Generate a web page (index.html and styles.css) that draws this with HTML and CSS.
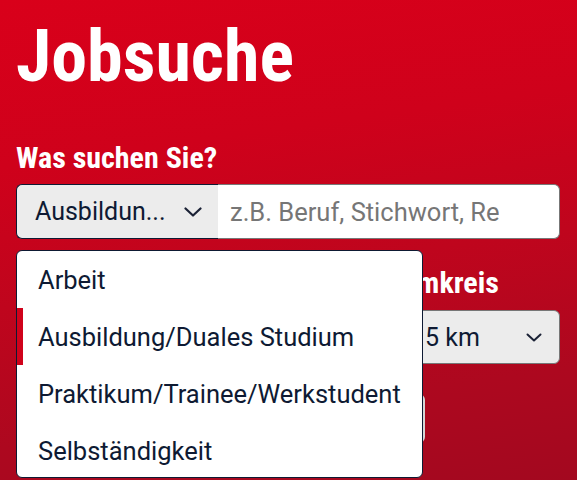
FILE: index.html
```html
<!DOCTYPE html>
<html lang="de">
<head>
<meta charset="utf-8">
<title>Jobsuche</title>
<link rel="stylesheet" href="styles.css">
</head>
<body>
<main class="page">
  <h1 class="title">Jobsuche</h1>
  <label class="label">Was suchen Sie?</label>
  <div class="search-group">
    <div class="type-wrap">
      <div class="type-select">
        <span class="type-value">Ausbildun...</span>
        <svg class="chev" width="18" height="10" viewBox="0 0 18 10"><path d="M1.5 1.5 L9 8.5 L16.5 1.5" fill="none" stroke="#1b2236" stroke-width="2.2" stroke-linecap="round" stroke-linejoin="round"/></svg>
      </div>
      <ul class="menu">
        <li class="menu-item">Arbeit</li>
        <li class="menu-item is-selected">Ausbildung/Duales Studium</li>
        <li class="menu-item">Praktikum/Trainee/Werkstudent</li>
        <li class="menu-item">Selbständigkeit</li>
      </ul>
    </div>
    <div class="keyword"><span class="placeholder">z.B. Beruf, Stichwort, Referenznummer</span></div>
  </div>
  <div class="row2">
    <div class="field">
      <label class="label">Wo?</label>
      <div class="where"></div>
    </div>
    <div class="field">
      <label class="label">Umkreis</label>
      <div class="radius">
        <span class="radius-value">15 km</span>
        <svg class="chev-sm" width="16" height="9" viewBox="0 0 16 9"><path d="M1.5 1.5 L8 7.5 L14.5 1.5" fill="none" stroke="#1b2236" stroke-width="2" stroke-linecap="round" stroke-linejoin="round"/></svg>
      </div>
    </div>
  </div>
  <div class="row3">
    <button class="more">Weitere Filter</button>
  </div>
</main>
</body>
</html>
```
FILE: styles.css
```css
html, body {
  margin: 0;
  padding: 0;
}
body {
  width: 577px;
  height: 480px;
  overflow: hidden;
  font-family: Roboto, "Liberation Sans", sans-serif;
  background: linear-gradient(172deg, #d9001a 0%, #cf011b 30%, #bf051d 55%, #ad081f 80%, #a3081f 100%);
  color: #0e1a33;
}
.page {
  padding: 20px 17px 0 16px;
}
.title {
  margin: 0;
  font-size: 72px;
  line-height: 73px;
  font-weight: 700;
  font-stretch: 75%;
  color: #fff;
}
.label {
  display: block;
  margin: 50px 0 11px;
  font-size: 30px;
  line-height: 30px;
  font-weight: 700;
  font-stretch: 75%;
  color: #fff;
}
.search-group {
  display: flex;
  height: 55px;
}
.type-wrap {
  position: relative;
  width: 202px;
  flex: none;
}
.type-select {
  box-sizing: border-box;
  height: 55px;
  display: flex;
  align-items: center;
  justify-content: space-between;
  padding: 0 16px 0 18px;
  background: #ececec;
  border: 1px solid #0e1a33;
  border-right: none;
  border-radius: 6px 0 0 6px;
  font-size: 25px;
  white-space: nowrap;
}
.keyword {
  flex: 1;
  box-sizing: border-box;
  height: 55px;
  display: flex;
  align-items: center;
  padding: 0 60px 0 12px;
  background: #fff;
  border: 1px solid #777;
  border-left: none;
  border-radius: 0 6px 6px 0;
  overflow: hidden;
}
.placeholder {
  font-size: 25.5px;
  color: #767676;
  white-space: nowrap;
  overflow: hidden;
}
.menu {
  position: absolute;
  top: 66px;
  left: 0;
  z-index: 5;
  box-sizing: border-box;
  width: 407px;
  height: 228px;
  margin: 0;
  padding: 0;
  list-style: none;
  background: #fff;
  border: 1px solid #0e1a33;
  border-radius: 6px;
  overflow: hidden;
}
.menu-item {
  box-sizing: border-box;
  height: 57px;
  display: flex;
  align-items: center;
  padding-left: 15px;
  font-size: 25.5px;
  color: #0e1a33;
  border-left: 6px solid transparent;
  white-space: nowrap;
}
.menu-item.is-selected {
  border-left-color: #d0021b;
}
.row2 {
  display: grid;
  grid-template-columns: 1fr 160px;
  column-gap: 20px;
}
.row2 .label {
  margin-top: 29px;
  margin-bottom: 12px;
}
.where {
  height: 54px;
  box-sizing: border-box;
  background: #fff;
  border: 1px solid #777;
  border-radius: 6px;
}
.radius {
  box-sizing: border-box;
  height: 54px;
  display: flex;
  align-items: center;
  justify-content: space-between;
  padding: 0 17px 0 10px;
  background: #ececec;
  border: 1px solid #777;
  border-radius: 6px;
  font-size: 25px;
}
.row3 {
  display: flex;
  padding-top: 30px;
}
.more {
  width: 409px;
  height: 49px;
  background: #fff;
  border: 1px solid #aaa;
  border-right: 3px solid #d5d5d5;
  border-radius: 6px;
  font-family: inherit;
  font-size: 20px;
  color: #0e1a33;
}
```
